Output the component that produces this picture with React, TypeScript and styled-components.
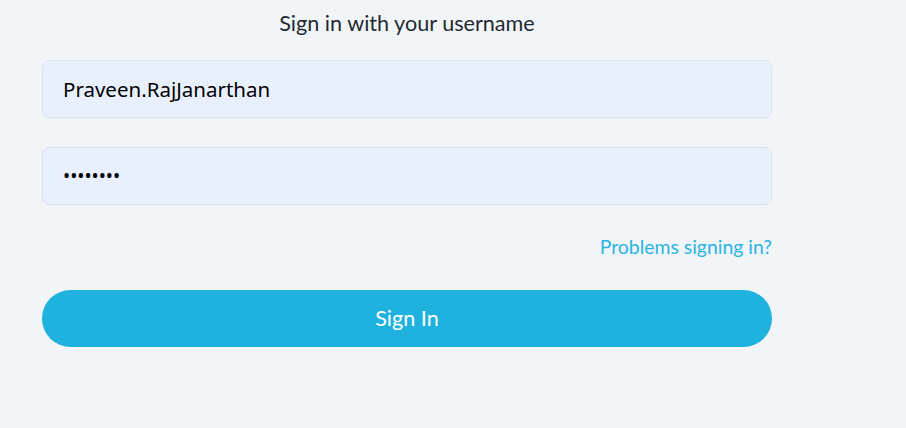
import React from "react";
import styled, { createGlobalStyle } from "styled-components";

const Global = createGlobalStyle`
  html, body { margin: 0; padding: 0; background: #f2f5f8; }
  body { font-family: Lato, "Open Sans", sans-serif; }
`;

const Page = styled.div`
  width: 906px;
  height: 428px;
  background: #f2f5f8;
  box-sizing: border-box;
  padding: 8px 0 0 42px;
`;

const Form = styled.form`
  width: 730px;
  display: flex;
  flex-direction: column;
`;

const Title = styled.h2`
  margin: 0;
  text-align: center;
  font-family: Lato, sans-serif;
  font-weight: 400;
  font-size: 21.6px;
  line-height: 30px;
  color: #1f2a33;
`;

const Input = styled.input<{ $mt: number; $fs: number }>`
  margin-top: ${(p) => p.$mt}px;
  height: 58px;
  box-sizing: border-box;
  border: 1px solid #dbe3ec;
  border-radius: 7px;
  background: #e8f0fe;
  padding: 0 20px;
  font-family: "Noto Sans", sans-serif;
  font-size: ${(p) => p.$fs}px;
  color: #000;
  outline: none;
`;

const LinkRow = styled.div`
  margin-top: 30px;
  display: flex;
  justify-content: flex-end;
`;

const Link = styled.a`
  font-family: Lato, sans-serif;
  font-size: 19.4px;
  line-height: 24px;
  color: #2ab4e2;
  text-decoration: none;
`;

const Button = styled.button`
  margin-top: 31px;
  height: 57px;
  border: none;
  border-radius: 29px;
  background: #20b2df;
  color: #fff;
  font-family: Lato, sans-serif;
  font-size: 21.6px;
  line-height: 1;
  padding: 0;
  cursor: pointer;
`;

export default function App() {
  return (
    <Page>
      <Global />
      <Form onSubmit={(e) => e.preventDefault()}>
        <Title>Sign in with your username</Title>
        <Input $mt={22} $fs={20.5} type="text" defaultValue="Praveen.RajJanarthan" />
        <Input $mt={29} $fs={19} type="password" defaultValue="password" />
        <LinkRow>
          <Link href="#">Problems signing in?</Link>
        </LinkRow>
        <Button type="submit">Sign In</Button>
      </Form>
    </Page>
  );
}
